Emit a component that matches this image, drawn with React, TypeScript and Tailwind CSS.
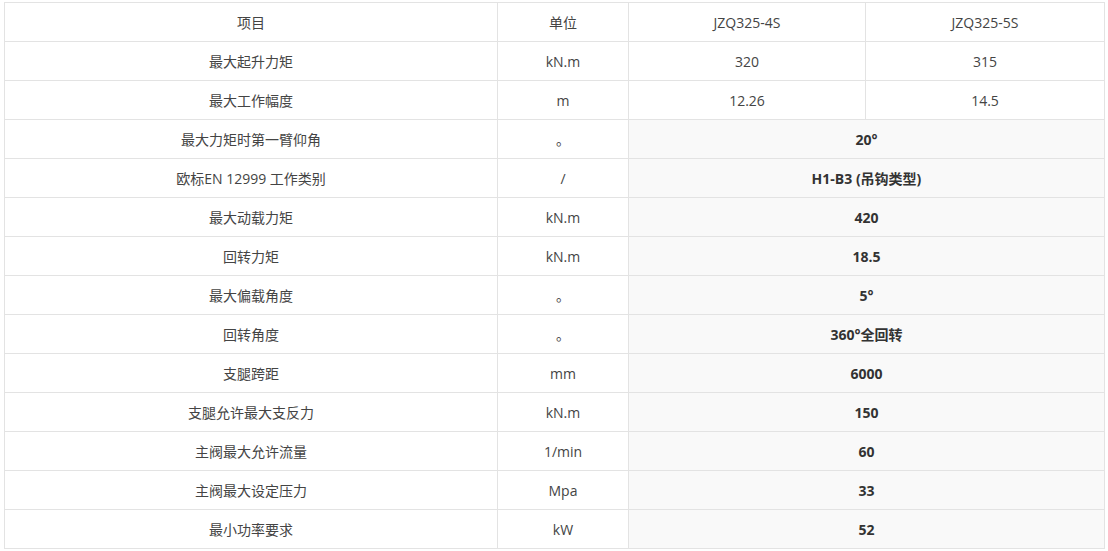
import React from "react";

const rows: [string, string, string, string?][] = [
  ["最大起升力矩", "kN.m", "320", "315"],
  ["最大工作幅度", "m", "12.26", "14.5"],
  ["最大力矩时第一臂仰角", "。", "20°"],
  ["欧标EN 12999 工作类别", "/", "H1-B3 (吊钩类型)"],
  ["最大动载力矩", "kN.m", "420"],
  ["回转力矩", "kN.m", "18.5"],
  ["最大偏载角度", "。", "5°"],
  ["回转角度", "。", "360°全回转"],
  ["支腿跨距", "mm", "6000"],
  ["支腿允许最大支反力", "kN.m", "150"],
  ["主阀最大允许流量", "1/min", "60"],
  ["主阀最大设定压力", "Mpa", "33"],
  ["最小功率要求", "kW", "52"],
];

const td = "border border-[#e3e3e3] h-[39px] p-0 text-center align-middle";

export default function App() {
  return (
    <div className="w-[1108px] h-[551px] bg-white overflow-hidden pt-[2px] pl-[4px]">
      <table
        className="table-fixed border-collapse w-[1100px] text-[14px] text-[#444]"
        style={{ fontFamily: '"Open Sans", "Noto Sans CJK SC", sans-serif' }}
      >
        <colgroup>
          <col className="w-[493px]" />
          <col className="w-[131px]" />
          <col className="w-[237px]" />
          <col className="w-[239px]" />
        </colgroup>
        <tbody>
          <tr>
            <td className={td}>项目</td>
            <td className={td}>单位</td>
            <td className={td}>JZQ325-4S</td>
            <td className={td}>JZQ325-5S</td>
          </tr>
          {rows.map((r, i) => (
            <tr key={i}>
              <td className={td}>{r[0]}</td>
              <td className={td}>{r[1]}</td>
              {r[3] !== undefined ? (
                <>
                  <td className={td}>{r[2]}</td>
                  <td className={td}>{r[3]}</td>
                </>
              ) : (
                <td className={`${td} bg-[#f9f9f9] font-bold text-[#333]`} colSpan={2}>
                  {r[2]}
                </td>
              )}
            </tr>
          ))}
        </tbody>
      </table>
    </div>
  );
}
